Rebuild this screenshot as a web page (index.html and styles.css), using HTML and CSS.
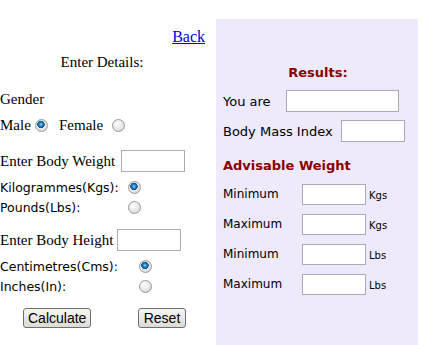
FILE: index.html
```html
<!DOCTYPE html>
<html lang="en">
<head>
    <meta charset="UTF-8">
    <title>Body Mass Index</title>
    <link rel="stylesheet" href="styles.css">
</head>
<body>
    <div class="page">
        <div class="details">
            <div class="row back"><a href="#">Back</a></div>
            <div class="row title">Enter Details:</div>
            <div class="row gender">Gender</div>
            <div class="row sex">
                <span class="male">Male</span><input type="radio" name="sex" class="radio" checked>
                <span class="female">Female</span><input type="radio" name="sex" class="radio">
            </div>
            <div class="row field weight">
                <span class="field-label">Enter Body Weight</span><input type="text" class="box">
            </div>
            <div class="row unit first">
                <span class="unit-label kg">Kilogrammes(Kgs):</span><input type="radio" name="wunit" class="radio" checked>
            </div>
            <div class="row unit">
                <span class="unit-label kg">Pounds(Lbs):</span><input type="radio" name="wunit" class="radio">
            </div>
            <div class="row field height">
                <span class="field-label">Enter Body Height</span><input type="text" class="box">
            </div>
            <div class="row unit first">
                <span class="unit-label cm">Centimetres(Cms):</span><input type="radio" name="hunit" class="radio" checked>
            </div>
            <div class="row unit">
                <span class="unit-label cm">Inches(In):</span><input type="radio" name="hunit" class="radio">
            </div>
            <div class="row buttons">
                <button class="btn calc">Calculate</button>
                <button class="btn reset">Reset</button>
            </div>
        </div>

        <div class="results">
            <div class="heading center">Results:</div>
            <div class="res-row first">
                <span class="res-label you">You are</span><input type="text" class="box wide">
            </div>
            <div class="res-row">
                <span class="res-label bmi">Body Mass Index</span><input type="text" class="box">
            </div>
            <div class="heading advise">Advisable Weight</div>
            <div class="res-row weight-row">
                <span class="res-label w">Minimum</span><input type="text" class="box"><span class="unit-small">Kgs</span>
            </div>
            <div class="res-row">
                <span class="res-label w">Maximum</span><input type="text" class="box"><span class="unit-small">Kgs</span>
            </div>
            <div class="res-row">
                <span class="res-label w">Minimum</span><input type="text" class="box"><span class="unit-small">Lbs</span>
            </div>
            <div class="res-row">
                <span class="res-label w">Maximum</span><input type="text" class="box"><span class="unit-small">Lbs</span>
            </div>
        </div>
    </div>
</body>
</html>
```

FILE: styles.css
```css
body {
    margin: 0;
    font-family: "Liberation Serif", "Times New Roman", serif;
    font-size: 15px;
    color: #000;
    background: #fff;
}
.page {
    display: flex;
    align-items: flex-start;
}
.details {
    width: 216px;
    padding-top: 28px;
    display: flex;
    flex-direction: column;
}
.row {
    display: flex;
    align-items: center;
    height: 18px;
}
.back {
    justify-content: flex-end;
    padding-right: 11px;
    font-size: 16px;
}
.back a { color: #0000ee; }
.title {
    margin-top: 7px;
    justify-content: center;
    padding-right: 12px;
}
.gender { margin-top: 19px; }
.sex { margin-top: 8px; }
.sex .male { width: 35px; }
.sex .female { width: 53px; margin-left: 11px; }
.field {
    height: 22px;
    margin-top: 16px;
}
.weight .field-label { width: 121px; }
.height { margin-top: 12px; }
.height .field-label { width: 117px; }
.unit {
    height: 20px;
    font-family: "DejaVu Sans", Verdana, sans-serif;
    font-size: 12.5px;
}
.unit.first { margin-top: 5px; }
.unit-label.kg { width: 128px; }
.unit-label.cm { width: 139px; }
.buttons {
    height: 20px;
    margin-top: 12px;
}

.radio {
    appearance: none;
    -webkit-appearance: none;
    width: 13px;
    height: 13px;
    margin: 0;
    border: 1px solid #9a9a9a;
    border-radius: 50%;
    background: radial-gradient(circle at 40% 35%, #ffffff 0%, #e6e6e6 55%, #c8c8c8 100%);
    flex-shrink: 0;
}
.radio:checked {
    background:
        radial-gradient(circle at 45% 40%, #9fdcff 0, #2f8fd0 1.5px, #0b4f86 3.5px, transparent 4px),
        radial-gradient(circle at 40% 35%, #ffffff 0%, #e6e6e6 55%, #c8c8c8 100%);
}

.box {
    width: 64px;
    height: 22px;
    box-sizing: border-box;
    border: 1px solid #a5acb2;
    background: #fff;
    margin: 0;
    padding: 0;
    flex-shrink: 0;
}
.box.wide { width: 113px; }

.btn {
    font-family: "Liberation Sans", Arial, sans-serif;
    font-size: 14px;
    height: 20px;
    padding: 0 4px;
    border: 1px solid #6f6f6f;
    border-radius: 3px;
    background: linear-gradient(#f6f6f2, #dcdcd6);
    color: #000;
}
.calc { margin-left: 23px; width: 68px; }
.reset { margin-left: 47px; width: 48px; }

/* dithered pink/blue panel, flattened to its mixed tone */
.results {
    margin-top: 19px;
    width: 202px;
    height: 326px;
    box-sizing: border-box;
    padding: 44px 0 0 7px;
    background: #eee9fb;
    font-family: "DejaVu Sans", Verdana, sans-serif;
    font-size: 13px;
}
.heading {
    height: 18px;
    display: flex;
    align-items: center;
    font-weight: bold;
    color: #8b0000;
    font-size: 13px;
}
.heading.center {
    justify-content: center;
    padding-right: 5px;
}
.heading.advise { margin-top: 14px; }
.res-row {
    display: flex;
    align-items: center;
    height: 22px;
    margin-top: 8px;
}
.res-row.first { margin-top: 9px; }
.res-row.weight-row { margin-top: 9px; }
.res-label.you { width: 63px; }
.res-label.bmi { width: 118px; }
.res-label.w { width: 79px; font-size: 12px; }
.res-row .box { height: 21px; }
.res-row.first .box, .res-row.first + .res-row .box { height: 22px; }
.unit-small {
    font-size: 10px;
    margin-left: 3px;
    margin-top: 3px;
}
```
